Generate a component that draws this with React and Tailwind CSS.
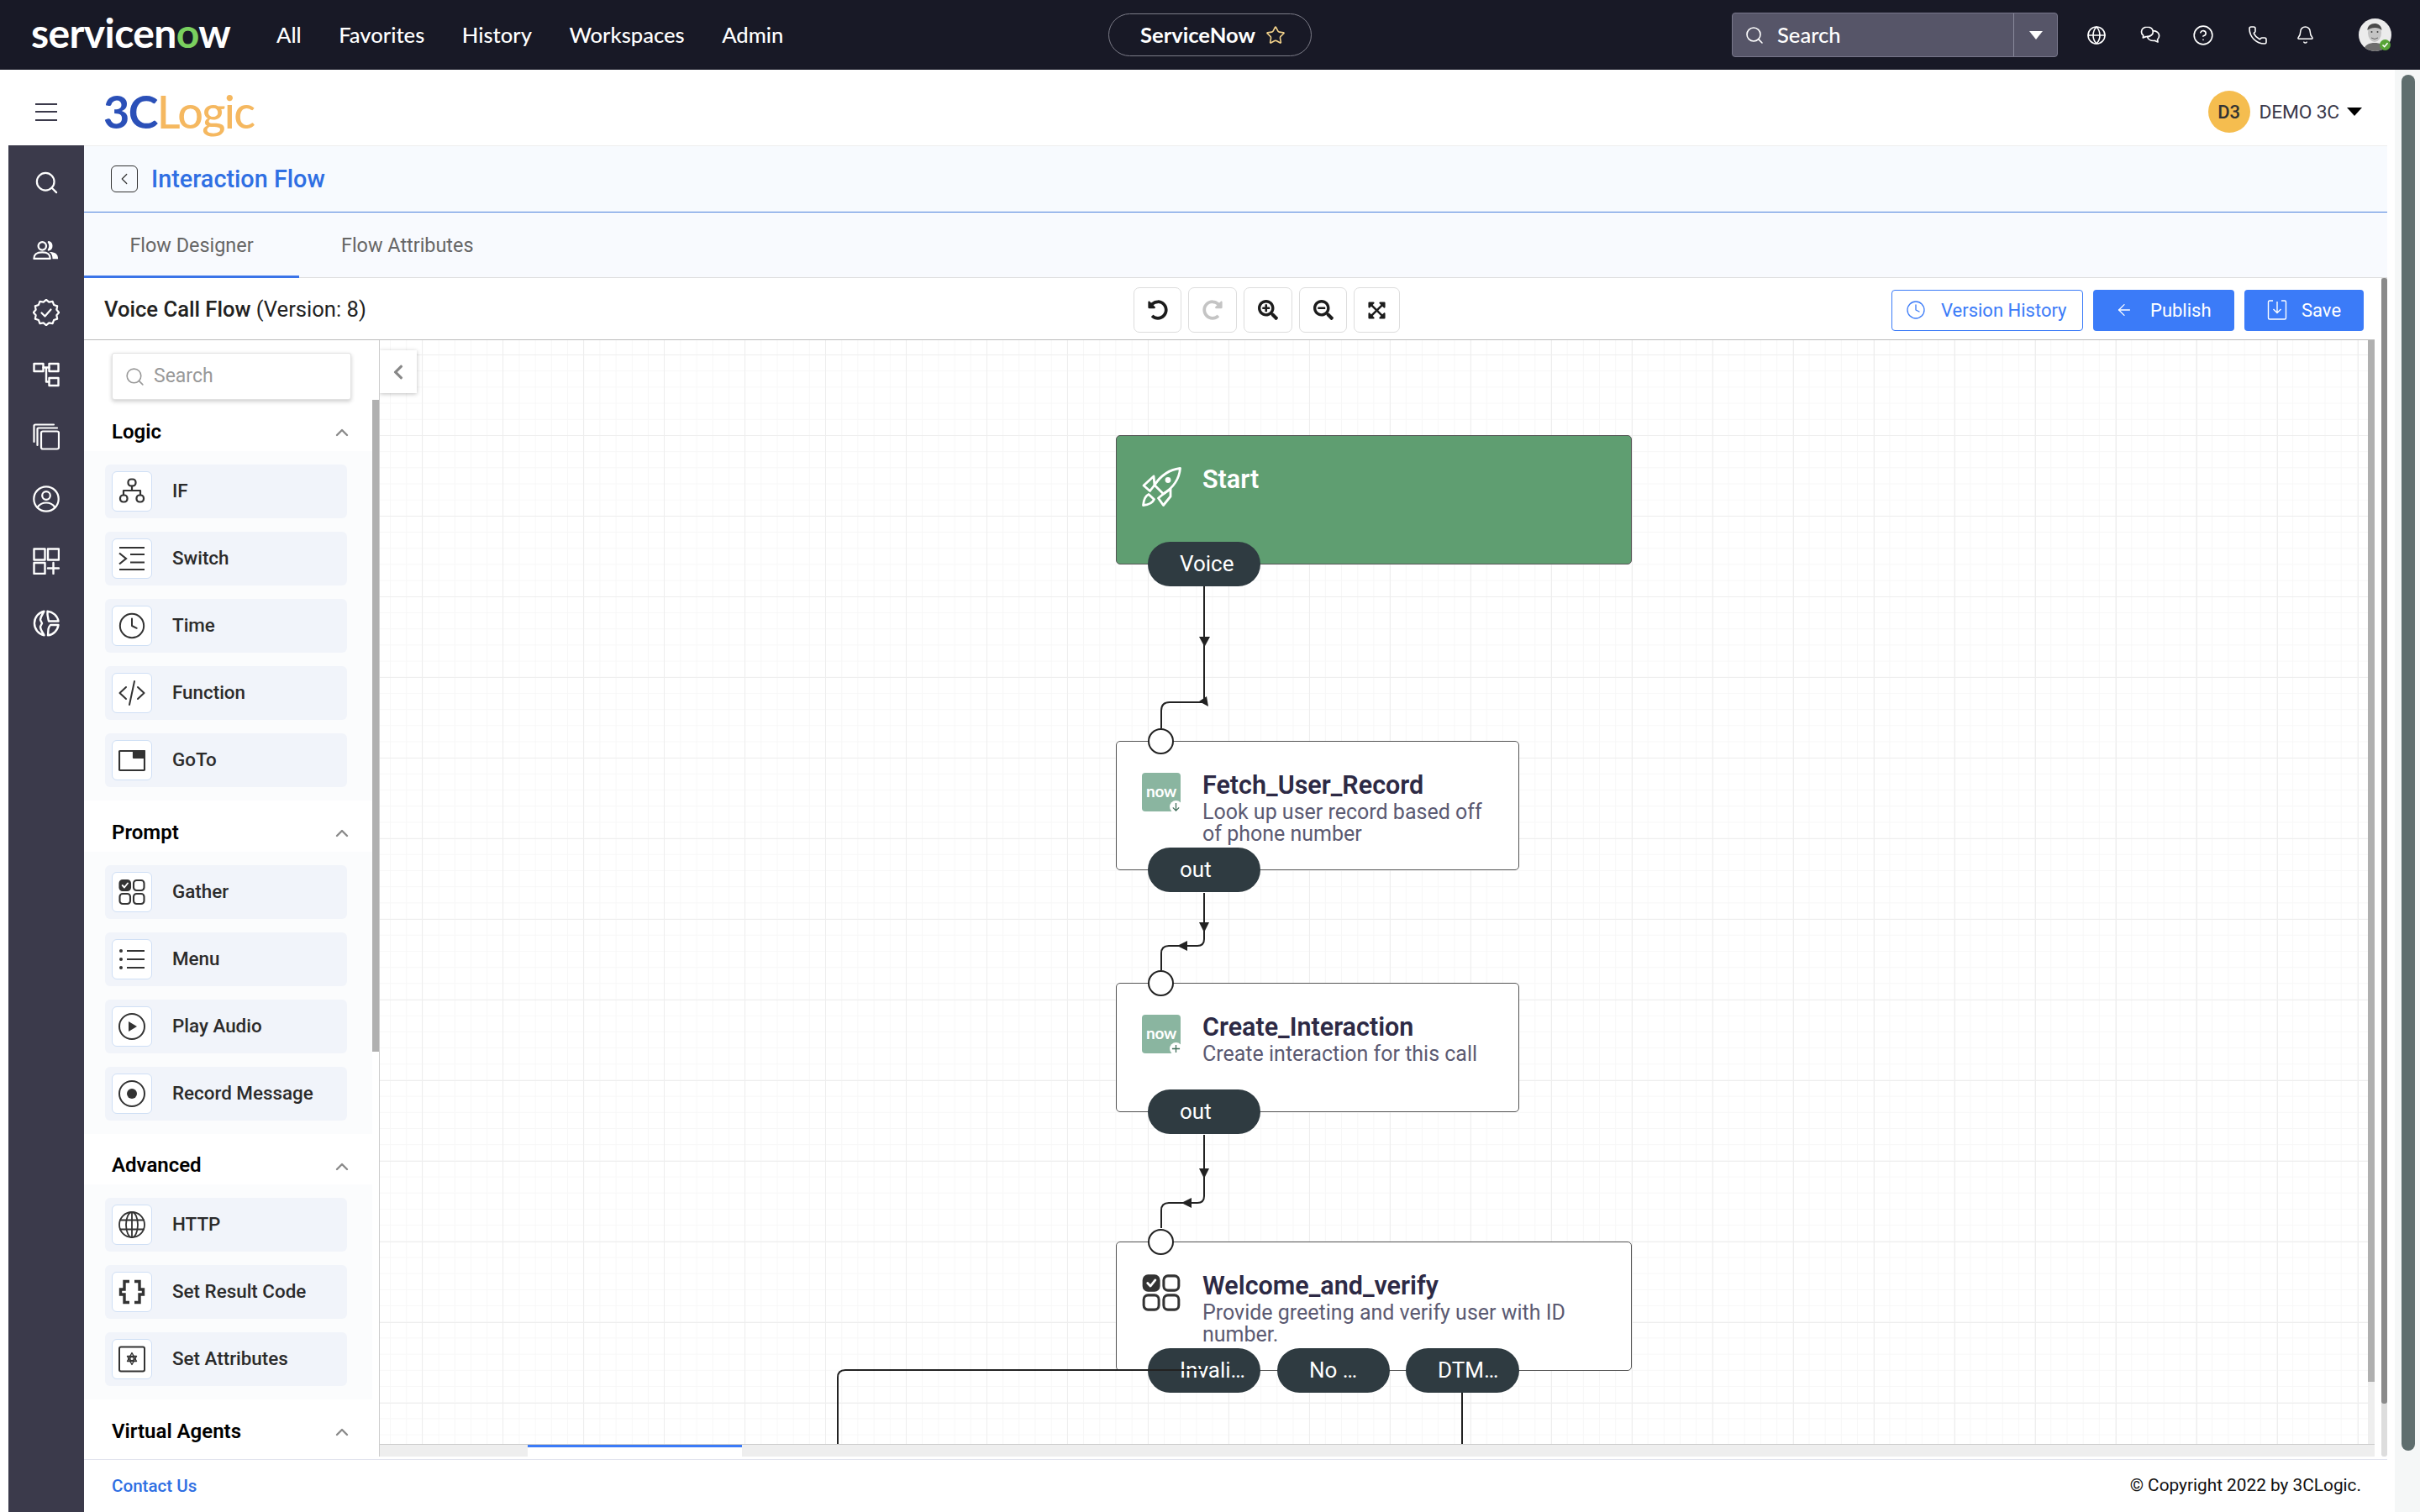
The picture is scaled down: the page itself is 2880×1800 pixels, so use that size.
import React from "react";
import { Search, Globe, CircleHelp, Phone, Bell, Star, ChevronUp, ChevronLeft, Clock, ArrowLeft } from "lucide-react";
import { FaUndoAlt, FaRedoAlt, FaSearchPlus, FaSearchMinus, FaExpandArrowsAlt, FaChevronLeft } from "react-icons/fa";

const S = ({ children, w = 32, h = 32, vb = "0 0 32 32", sw = 2.4, className = "" }) => (
  <svg width={w} height={h} viewBox={vb} fill="none" stroke="currentColor" strokeWidth={sw} strokeLinecap="round" strokeLinejoin="round" className={className}>
    {children}
  </svg>
);

const badgePts = (() => {
  const p = [];
  for (let i = 0; i < 24; i++) {
    const r = i % 2 ? 12.8 : 15.2;
    const a = (i * Math.PI) / 12;
    p.push(`${(16 + r * Math.sin(a)).toFixed(2)},${(16 - r * Math.cos(a)).toFixed(2)}`);
  }
  return p.join(" ");
})();

const SideUsers = () => (
  <S h={24} vb="0 0 34 24" sw={2.4}>
    <circle cx="12" cy="6.5" r="5" />
    <path d="M1.5 22.5 C1.5 16 6 14.5 12 14.5 C18 14.5 22 16 22 22.5 Z" />
    <path d="M20 1.5 A5.2 5.2 0 0 1 20 11.5 C22 8.5 22 4.5 20 1.5 Z" fill="currentColor" />
    <path d="M21 14 C28 14 32 16 32 23 L25 23 C25 19 24 16 21 14 Z" fill="currentColor" stroke="none" />
  </S>
);
const SideBadge = () => (
  <S sw={2.2}>
    <polygon points={badgePts} />
    <path d="M10.5 16.5 L14.5 20.5 L21.5 12.5" />
  </S>
);
const SideFlow = () => (
  <S sw={2.4}>
    <rect x="1.5" y="3" width="11" height="9" />
    <rect x="19.5" y="3" width="11" height="9" />
    <rect x="19.5" y="20" width="11" height="9" />
    <path d="M12.5 7.5 H19.5 M16 7.5 V24.5 H19.5" />
  </S>
);
const SideStack = () => (
  <S sw={2.2}>
    <rect x="10" y="9.5" width="21" height="21" rx="2" />
    <path d="M5.5 26 V6.5 Q5.5 5.5 6.5 5.5 H29" />
    <path d="M1.5 22 V3 Q1.5 1.5 3 1.5 H25" />
  </S>
);
const SideUser = () => (
  <S sw={2.2}>
    <ellipse cx="16" cy="16" rx="14.7" ry="14.7" />
    <circle cx="16" cy="12" r="4.8" />
    <path d="M5.5 26 C9 21 12 20.5 16 20.5 C20 20.5 23 21 26.5 26" />
  </S>
);
const SideGrid = () => (
  <S sw={2.4}>
    <rect x="1.5" y="1.5" width="13" height="13" />
    <rect x="18" y="1.5" width="13" height="13" />
    <rect x="1.5" y="18" width="13" height="13" />
    <path d="M24.5 18 V31 M18 24.5 H31" />
  </S>
);
const SidePie = () => (
  <S sw={2.4}>
    <path d="M13.5 1.8 A14.5 14.5 0 0 0 13.5 30.2 C12 27 9 24 9 20 L11 16 L9 12 C9 8 12 5 13.5 1.8 Z" />
    <path d="M17.5 1.8 A14.5 14.5 0 0 1 30.5 13.5 H19 C18 9 17 6 17.5 1.8 Z" />
    <path d="M30.5 18 A14.5 14.5 0 0 1 18 30.4 L18.5 23 C19 21 20 19 21 18 Z" />
  </S>
);

const IconIf = () => (
  <S sw={2.2}>
    <rect x="11.5" y="1.5" width="9" height="8" rx="3.5" />
    <path d="M16 9.5 V15 M6 20 V15 H26 V20" />
    <rect x="2" y="20.5" width="8.5" height="8" rx="3.5" />
    <rect x="21.5" y="20.5" width="8.5" height="8" rx="3.5" />
  </S>
);
const IconSwitch = () => (
  <S sw={2.2}>
    <path d="M1 3 H31 M1 29 H31 M1 9.5 L9 16 L1 22.5 M14 11 H31 M14 20.5 H31" strokeLinecap="butt" strokeLinejoin="miter" />
  </S>
);
const IconFn = () => (
  <S sw={2}>
    <path d="M9 9 L1.5 16 L9 23 M23 9 L30.5 16 L23 23 M19 2 L13 30" />
  </S>
);
const IconGoTo = () => (
  <S sw={2.2}>
    <rect x="1" y="5" width="30" height="23" rx="1" />
    <rect x="18" y="5" width="13" height="8" fill="currentColor" />
  </S>
);
const IconGather = ({ w = 32, h = 32 }) => (
  <S w={w} h={h} sw={2.1}>
    <rect x="1.5" y="2" width="12.5" height="12" rx="3.5" fill="currentColor" />
    <path d="M4.7 8 L7 10.5 L11 5.5" stroke="#fff" strokeWidth="1.9" />
    <rect x="18" y="2" width="12.5" height="12" rx="3.5" />
    <rect x="1.5" y="18" width="12.5" height="12" rx="3.5" />
    <rect x="18" y="18" width="12.5" height="12" rx="3.5" />
  </S>
);
const IconMenu = () => (
  <S sw={2}>
    <circle cx="3" cy="6" r="2" fill="currentColor" stroke="none" />
    <circle cx="3" cy="16" r="2" fill="currentColor" stroke="none" />
    <circle cx="3" cy="26" r="2" fill="currentColor" stroke="none" />
    <path d="M10 6 H31 M10 16 H31 M10 26 H31" strokeLinecap="butt" />
  </S>
);
const IconPlay = () => (
  <S sw={2}>
    <circle cx="16" cy="16" r="15" />
    <path d="M12 10 L22 16 L12 22 Z" fill="currentColor" stroke="none" />
  </S>
);
const IconRecord = () => (
  <S sw={2}>
    <circle cx="16" cy="16" r="15" />
    <circle cx="16" cy="16" r="6" fill="currentColor" stroke="none" />
  </S>
);
const IconHttp = () => (
  <S sw={1.8}>
    <circle cx="16" cy="16" r="15" />
    <ellipse cx="16" cy="16" rx="7" ry="15" />
    <path d="M16 1 V31 M2 10.5 H30 M2 21.5 H30" />
  </S>
);
const IconBraces = () => (
  <S sw={3.4}>
    <path d="M13 3.5 H7 V13 H2.5 V19 H7 V28.5 H13 M19 3.5 H25 V13 H29.5 V19 H25 V28.5 H19" strokeLinecap="butt" strokeLinejoin="miter" />
  </S>
);
const IconAttr = () => (
  <S sw={2}>
    <rect x="1" y="1.5" width="30" height="29" rx="2" />
    <polygon points="16,8.5 21.5,18.5 10.5,18.5" strokeWidth="1.4" />
    <polygon points="16,22.5 21.5,12.5 10.5,12.5" strokeWidth="1.4" />
    <circle cx="16" cy="15.5" r="2.2" fill="#fff" strokeWidth="1.3" />
  </S>
);

const ChatIcon = () => (
  <S w={24} h={24} vb="0 0 24 24" sw={1.7}>
    <path d="M8.5 2 C4.5 2 1.5 4.6 1.5 7.9 C1.5 9.9 2.6 11.4 3.8 12.2 L3.3 15 L6.9 13.6 C7.2 13.7 7.6 13.7 8 13.7 C12 13.7 15.3 11.2 15.3 7.9 C15.3 4.6 12.4 2 8.5 2 Z" />
    <path d="M15.6 6.7 C19.6 6.7 22.6 9.3 22.6 12.6 C22.6 14.6 21.6 16.1 20.6 16.9 L21 20 L17.6 18.4 C17 18.5 16.6 18.5 16 18.5 C12 18.5 9 16.4 8.6 13.6" />
  </S>
);

const Rocket = () => (
  <svg width="47" height="47" viewBox="0 0 47 47" fill="none" stroke="#fff" strokeWidth="2.8" strokeLinejoin="round">
    <path d="M45.5 1.5 C34 3 23 9 15 21.5 L25.5 32 C38 24 44.5 13 45.5 1.5 Z" />
    <path d="M14 11 L2 22 L9.5 28.5 L15 21.5 Z" />
    <path d="M34 26 L34 35 L25.5 45.5 L19.5 37 L25.5 32 Z" />
    <path d="M8 32.5 C3.5 34.5 2 40 1.5 45.5 C8 45 12.5 43 14.5 38.5 Z" />
    <circle cx="31" cy="15.5" r="3.4" fill="#fff" stroke="none" />
  </svg>
);

const NowIcon = ({ plus }) => (
  <div className="relative w-[46px] h-[46px] rounded-[4px] bg-[#8ab5a0] flex items-center justify-center shrink-0">
    <span className="-mt-[4px] text-white text-[19px] font-bold leading-none font-['Lato',sans-serif] tracking-[-0.3px]">now</span>
    <span className="absolute right-[-2px] bottom-[-2px] w-[15px] h-[15px] rounded-full bg-white flex items-center justify-center">
      <svg width="11" height="11" viewBox="0 0 12 12" fill="none" stroke="#3f6d58" strokeWidth="1.4">
        {plus ? <path d="M6 1 V11 M1 6 H11" /> : <path d="M6 1 V11 M2 7 L6 11 L10 7" />}
      </svg>
    </span>
  </div>
);

const Pill = ({ children, pos }) => (
  <div className={`absolute top-[126px] h-[53px] rounded-full bg-[#2f3b41] text-white text-[26px] pl-[38px] pb-[1px] flex items-center leading-none whitespace-nowrap ${pos}`}>
    {children}
  </div>
);

const Port = () => (
  <div className="absolute left-[37px] top-[-16px] w-[31px] h-[31px] rounded-full bg-white border-2 border-[#222]" />
);

const Node = ({ pos, icon, title, desc, green, port = true, children }) => (
  <div className={`absolute h-[154px] rounded-[5px] border border-[#555] flex pl-[30px] pt-[36px] gap-[26px] ${green ? "bg-[#5f9e71]" : "bg-white"} ${pos}`}>
    {port && <Port />}
    <div className="w-[46px] h-[46px] mt-[1px] shrink-0 text-[#333]">{icon}</div>
    <div className="min-w-0 pr-[30px]">
      <div className={`text-[30.5px] leading-[32px] font-semibold ${green ? "text-white" : "text-[#2d2a45]"}`}>{title}</div>
      {desc && <div className="mt-[3px] text-[25px] leading-[26px] text-[#5b5a72]">{desc}</div>}
    </div>
    {children}
  </div>
);

const Item = ({ icon, label }) => (
  <div className="ml-[25px] w-[288px] h-[64px] rounded-[6px] bg-[#f1f4fa] flex items-center pl-[8px]">
    <div className="w-[48px] h-[48px] rounded-[6px] bg-white border border-[#cfdff5] flex items-center justify-center text-[#333]">{icon}</div>
    <span className="ml-[24px] text-[22.4px] font-medium text-[#2b2b2b] whitespace-nowrap">{label}</span>
  </div>
);

const Header = ({ title, cls }) => (
  <div className={`w-[343px] pt-[14px] pl-[33px] pr-[24px] flex items-center ${cls}`}>
    <span className="text-[24px] font-semibold text-black whitespace-nowrap">{title}</span>
    <ChevronUp size={24} strokeWidth={2.4} className="ml-auto mt-[3px] text-[#8a8a8a]" />
  </div>
);

const Section = ({ children }) => (
  <div className="w-[343px] py-[16px] bg-[#fbfcfd] flex flex-col gap-[16px]">{children}</div>
);

const Tool = ({ children, w, gray }) => (
  <button className={`h-[54px] ${w} rounded-[7px] border border-[#ddd] bg-white flex items-center justify-center ${gray ? "text-[#c4c4c4]" : "text-[#1c1c1c]"}`}>
    {children}
  </button>
);

export default function App() {
  return (
    <div className="w-[2880px] h-[1800px] overflow-hidden flex flex-col bg-white font-['Roboto',sans-serif] text-[#222]">
      {/* ServiceNow bar */}
      <div className="h-[83px] shrink-0 bg-[#181926] flex items-center text-white">
        <div className="w-[329px] pl-[37px] text-[48px] leading-none font-bold font-['Lato',sans-serif] tracking-[-0.6px] whitespace-nowrap -mt-[6px]">
          servicen<span className="text-[#7ad05f]">o</span>w
        </div>
        <div className="w-[990px] flex gap-[44.5px] text-[25.6px] font-['Lato',sans-serif] font-medium">
          <span>All</span>
          <span>Favorites</span>
          <span>History</span>
          <span>Workspaces</span>
          <span>Admin</span>
        </div>
        <div className="w-[242px] h-[51px] rounded-full border border-[#7c7c88] flex items-center pl-[37px] gap-[12px] font-['Lato',sans-serif] text-[25.6px] font-bold">
          <span>ServiceNow</span>
          <Star size={24} strokeWidth={1.6} className="text-[#f3d28b]" />
        </div>
        <div className="ml-[500px] w-[388px] h-[53px] rounded-[4px] bg-[#565568] border border-[#77768a] flex items-center">
          <Search size={24} strokeWidth={1.6} className="ml-[14px]" />
          <span className="ml-[15px] text-[25.6px] font-['Lato',sans-serif] font-medium">Search</span>
          <div className="ml-auto w-[52px] h-full border-l border-[#8a8a9c] flex items-center justify-center">
            <span className="w-0 h-0 border-l-[8px] border-r-[8px] border-t-[10px] border-l-transparent border-r-transparent border-t-white" />
          </div>
        </div>
        <div className="ml-[34px] flex items-center gap-[40px]">
          <Globe size={24} strokeWidth={1.6} />
          <ChatIcon />
          <CircleHelp size={26} strokeWidth={1.5} className="-ml-[2px]" />
          <Phone size={24} strokeWidth={1.6} />
          <Bell size={23} strokeWidth={1.6} className="-ml-[7px]" />
        </div>
        <div className="relative ml-[52px] w-[39px] h-[39px]">
          <svg width="39" height="39" viewBox="0 0 39 39" className="rounded-full">
            <rect width="39" height="39" fill="#ececec" />
            <ellipse cx="19" cy="17" rx="8" ry="11" fill="#c4c4c4" />
            <path d="M10.5 14 C10 4 27 3 27.5 14 C24 10 15 10 10.5 14 Z" fill="#4a4a4a" />
            <path d="M15 23 Q19 26 23 23" stroke="#666" fill="none" />
            <circle cx="15.5" cy="16" r="1" fill="#444" />
            <circle cx="22.5" cy="16" r="1" fill="#444" />
            <path d="M5 39 C7 31 13 29 19 29 C25 29 31 31 33 39 Z" fill="#6d6d6d" />
          </svg>
          <span className="absolute right-[1px] bottom-[1px] w-[13px] h-[13px] rounded-full bg-[#57a337] flex items-center justify-center">
            <svg width="9" height="9" viewBox="0 0 9 9" fill="none" stroke="#fff" strokeWidth="1.6"><path d="M1.5 4.5 L3.7 6.7 L7.5 2.3" /></svg>
          </span>
        </div>
      </div>

      <div className="flex-1 flex min-h-0">
        <div className="w-[2850px] flex flex-col">
          {/* Product header */}
          <div className="h-[90px] shrink-0 flex items-center pt-[10px]">
            <div className="ml-[42px] w-[26px] flex flex-col gap-[7.5px]">
              <span className="h-[2px] bg-[#3b3a4b]" />
              <span className="h-[2px] bg-[#3b3a4b]" />
              <span className="h-[2px] bg-[#3b3a4b]" />
            </div>
            <div className="ml-[55px] -mt-[1px] text-[54px] leading-none font-['Lato',sans-serif] font-medium tracking-[-1.6px] whitespace-nowrap">
              <span className="text-[#2b50b8] font-bold">3C</span>
              <span className="text-[#f5b860]">Logic</span>
            </div>
            <div className="ml-auto flex items-center pr-[39px]">
              <span className="w-[50px] h-[50px] rounded-full bg-[#f5bd4f] flex items-center justify-center text-[22px] font-medium text-[#333]">D3</span>
              <span className="ml-[11px] mt-[2px] text-[22.8px] text-[#3b3a4b] tracking-[-0.2px]">DEMO 3C</span>
              <span className="ml-[9px] w-0 h-0 border-l-[9px] border-r-[9px] border-t-[10px] border-l-transparent border-r-transparent border-t-black" />
            </div>
          </div>

          <div className="flex-1 flex min-h-0 pl-[10px]">
            {/* Dark rail */}
            <div className="w-[90px] shrink-0 bg-[#3b3a4b] text-white flex flex-col items-center pt-[7px]">
              <div className="h-[74px] mb-[7px] flex items-center justify-center"><Search size={31} strokeWidth={1.7} /></div>
              <div className="h-[74px] flex items-center justify-center"><SideUsers /></div>
              <div className="h-[74px] flex items-center justify-center"><SideBadge /></div>
              <div className="h-[74px] flex items-center justify-center"><SideFlow /></div>
              <div className="h-[74px] flex items-center justify-center"><SideStack /></div>
              <div className="h-[74px] flex items-center justify-center"><SideUser /></div>
              <div className="h-[74px] flex items-center justify-center"><SideGrid /></div>
              <div className="h-[74px] flex items-center justify-center"><SidePie /></div>
            </div>

            <div className="w-[2741px] flex flex-col min-h-0">
              {/* Page header */}
              <div className="h-[80px] shrink-0 bg-[#f7fafe] border-t border-t-[#eeeeee] border-b border-b-[#4a7fdc] flex items-center pl-[32px]">
                <div className="w-[32px] h-[32px] rounded-[6px] border-[1.5px] border-[#333] flex items-center justify-center">
                  <ChevronLeft size={22} strokeWidth={1.3} className="text-[#333]" />
                </div>
                <span className="ml-[16px] mt-[2px] text-[28.8px] font-medium text-[#2f6fe3]">Interaction Flow</span>
              </div>
              {/* Tabs */}
              <div className="h-[78px] shrink-0 bg-[#f8fafe] border-b-[1.5px] border-[#ddd] flex">
                <div className="w-[256px] h-[78px] pt-[5px] border-b-[3px] border-[#3b74e8] flex items-center justify-center text-[23.4px] text-[#666]">Flow Designer</div>
                <div className="ml-[50px] h-[78px] pt-[2px] flex items-center text-[23.4px] text-[#666]">Flow Attributes</div>
              </div>

              <div className="flex-1 flex min-h-0">
                <div className="w-[2726px] flex flex-col">
                  {/* Toolbar */}
                  <div className="h-[74px] shrink-0 border-b-[1.5px] border-[#bbb] flex items-center pl-[24px] pr-[13px] pt-[3px]">
                    <div className="w-[1225px] -mt-[2px] text-[25.6px] whitespace-nowrap text-[#222]">
                      <span className="font-medium">Voice Call Flow</span> (Version: 8)
                    </div>
                    <div className="flex gap-[8px]">
                      <Tool w="w-[57px]"><FaUndoAlt size={24} /></Tool>
                      <Tool w="w-[58px]" gray><FaRedoAlt size={24} /></Tool>
                      <Tool w="w-[58px]"><FaSearchPlus size={24} /></Tool>
                      <Tool w="w-[57px]"><FaSearchMinus size={24} /></Tool>
                      <Tool w="w-[55px]"><FaExpandArrowsAlt size={23} /></Tool>
                    </div>
                    <div className="ml-auto flex gap-[12px] text-[22px]">
                      <button className="w-[228px] h-[49px] rounded-[4px] border border-[#3b7bf8] text-[#3b7bf8] bg-white flex items-center pl-[16px] gap-[18px]">
                        <Clock size={24} strokeWidth={1.3} />
                        <span>Version History</span>
                      </button>
                      <button className="w-[168px] h-[49px] rounded-[4px] bg-[#3b7bf8] text-white flex items-center pl-[26px] gap-[20px]">
                        <ArrowLeft size={22} strokeWidth={1.4} />
                        <span>Publish</span>
                      </button>
                      <button className="w-[142px] h-[49px] rounded-[4px] bg-[#3b7bf8] text-white flex items-center pl-[27px] gap-[17px]">
                        <svg width="24" height="26" viewBox="0 0 24 26" fill="none" stroke="currentColor" strokeWidth="1.4">
                          <path d="M7 2 H3 Q1.5 2 1.5 3.5 V22.5 Q1.5 24 3 24 H21 Q22.5 24 22.5 22.5 V3.5 Q22.5 2 21 2 H17" />
                          <path d="M12 3 V16 M7.5 12 L12 16.5 L16.5 12" />
                        </svg>
                        <span>Save</span>
                      </button>
                    </div>
                  </div>

                  <div className="flex-1 flex min-h-0">
                    {/* Palette */}
                    <div className="relative w-[352px] shrink-0 border-r-[1.5px] border-[#ccc] overflow-hidden bg-white">
                      <div className="mt-[15px] ml-[33px] w-[285px] h-[56px] rounded-[3px] border border-[#e2e2e2] bg-white shadow-[0_2px_5px_rgba(0,0,0,0.2)] flex items-center pl-[14px]">
                        <Search size={25} strokeWidth={1.5} className="text-[#999]" />
                        <span className="ml-[10px] text-[23px] text-[#999]">Search</span>
                      </div>
                      <Header title="Logic" cls="h-[61px]" />
                      <Section>
                        <Item icon={<IconIf />} label="IF" />
                        <Item icon={<IconSwitch />} label="Switch" />
                        <Item icon={<Clock size={34} strokeWidth={1.4} />} label="Time" />
                        <Item icon={<IconFn />} label="Function" />
                        <Item icon={<IconGoTo />} label="GoTo" />
                      </Section>
                      <Header title="Prompt" cls="h-[61px]" />
                      <Section>
                        <Item icon={<IconGather />} label="Gather" />
                        <Item icon={<IconMenu />} label="Menu" />
                        <Item icon={<IconPlay />} label="Play Audio" />
                        <Item icon={<IconRecord />} label="Record Message" />
                      </Section>
                      <Header title="Advanced" cls="h-[60px]" />
                      <Section>
                        <Item icon={<IconHttp />} label="HTTP" />
                        <Item icon={<IconBraces />} label="Set Result Code" />
                        <Item icon={<IconAttr />} label="Set Attributes" />
                      </Section>
                      <Header title="Virtual Agents" cls="h-[61px]" />
                      <div className="absolute left-[343px] top-[71px] w-[8px] h-[776px] bg-[#b0b0b0]" />
                    </div>

                    {/* Canvas */}
                    <div className="relative flex-1 overflow-hidden bg-white bg-[linear-gradient(to_right,#eeeeee_1px,transparent_1px),linear-gradient(to_bottom,#eeeeee_1px,transparent_1px),linear-gradient(to_right,#f7f7f7_1px,transparent_1px),linear-gradient(to_bottom,#f7f7f7_1px,transparent_1px)] bg-[size:96px_96px,96px_96px,19.2px_19.2px,19.2px_19.2px] bg-[position:50px_17px,50px_17px,12px_17px,12px_17px]">
                      <div className="absolute left-0 top-[12px] w-[44px] h-[51px] bg-white shadow-[0_1px_5px_rgba(0,0,0,0.25)] flex items-center justify-center">
                        <FaChevronLeft size={20} className="text-[#888]" />
                      </div>

                      <Node pos="left-[876px] top-[113px] w-[614px]" green port={false} icon={<Rocket />} title="Start">
                        <Pill pos="left-[37px] w-[134px]">Voice</Pill>
                      </Node>
                      <Node pos="left-[876px] top-[477px] w-[480px]" icon={<NowIcon />} title="Fetch_User_Record" desc="Look up user record based off of phone number">
                        <Pill pos="left-[37px] w-[134px]">out</Pill>
                      </Node>
                      <Node pos="left-[876px] top-[765px] w-[480px]" icon={<NowIcon plus />} title="Create_Interaction" desc="Create interaction for this call">
                        <Pill pos="left-[37px] w-[134px]">out</Pill>
                      </Node>
                      <Node pos="left-[876px] top-[1073px] w-[614px]" icon={<IconGather w={46} h={46} />} title="Welcome_and_verify" desc="Provide greeting and verify user with ID number.">
                        <Pill pos="left-[37px] w-[134px]">Invali…</Pill>
                        <Pill pos="left-[191px] w-[134px]">No …</Pill>
                        <Pill pos="left-[344px] w-[135px]">DTM…</Pill>
                      </Node>

                      <svg className="absolute left-0 top-0" width="2374" height="1329" viewBox="452 405 2374 1329" fill="none" stroke="#222" strokeWidth="2">
                        <path d="M1433 698 V836 H1392 Q1382 836 1382 846 V867" />
                        <path d="M1433 1063 V1118 Q1433 1126 1425 1126 H1391 Q1382 1126 1382 1135 V1155" />
                        <path d="M1433 1351 V1424 Q1433 1432 1425 1432 H1391 Q1382 1432 1382 1441 V1462" />
                        <path d="M1433 1631 H1006 Q997 1631 997 1640 V1719" />
                        <path d="M1740 1658 V1719" />
                        <g fill="#222" stroke="none">
                          <polygon points="1427,758 1440,758 1433.5,770" />
                          <polygon points="1427,835 1436,829 1438,841" />
                          <polygon points="1427,1098 1439,1098 1433,1110" />
                          <polygon points="1401,1126 1413,1120 1413,1132" />
                          <polygon points="1427,1391 1439,1391 1433,1403" />
                          <polygon points="1406,1432 1418,1426 1418,1438" />
                        </g>
                      </svg>

                      {/* Scrollbars */}
                      <div className="absolute right-0 top-0 bottom-0 w-[8px] bg-[#eeeeee]">
                        <div className="w-full h-[1240px] bg-[#b0b0b0]" />
                      </div>
                      <div className="absolute left-0 right-0 bottom-0 h-[15px] bg-[#eeeeee] border-t border-[#cccccc]">
                        <div className="absolute left-[176px] top-0 w-[255px] h-[15px] bg-white border-t-[3px] border-[#3b7bf8]" />
                      </div>
                    </div>
                  </div>
                </div>
                {/* Page scrollbar */}
                <div className="ml-[8px] w-[7px] bg-[#dddddd] rounded-b-[3px]">
                  <div className="w-full h-[1340px] rounded-[3px] bg-[#8a8a8a]" />
                </div>
              </div>

              {/* Footer */}
              <div className="mt-[3px] h-[63px] shrink-0 border-t border-[#e2e4ee] flex items-center justify-between pl-[33px] pr-[31px]">
                <span className="text-[20.6px] font-medium text-[#2f6fe3]">Contact Us</span>
                <span className="text-[20.8px] text-[#111]">© Copyright 2022 by 3CLogic.</span>
              </div>
            </div>
          </div>
        </div>
        {/* Outer scrollbar */}
        <div className="w-[30px] bg-[#f5f7f7] pl-[8px] pt-[6px]">
          <div className="w-[16px] h-[1638px] rounded-full bg-[#5f6e6e]" />
        </div>
      </div>
    </div>
  );
}
